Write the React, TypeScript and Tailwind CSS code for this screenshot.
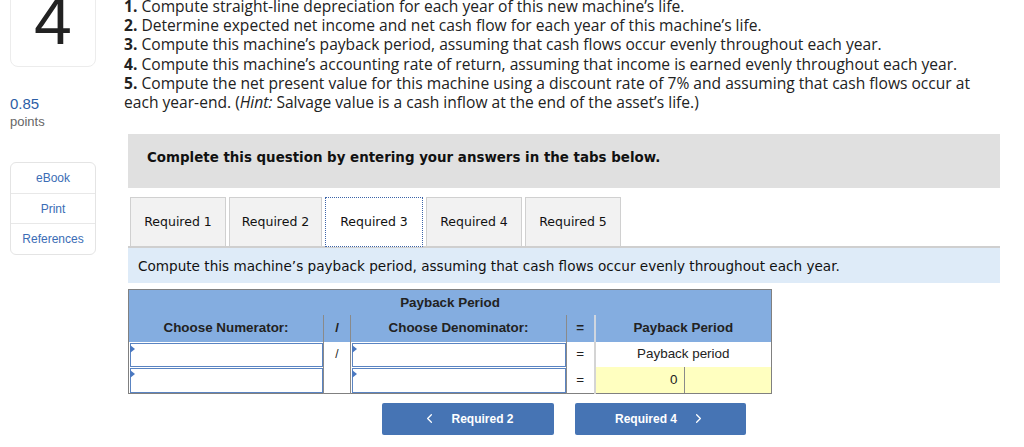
import React from 'react';
import { ChevronLeft, ChevronRight } from 'lucide-react';

const questionLines = [
  { n: '1.', text: 'Compute straight-line depreciation for each year of this new machine’s life.' },
  { n: '2.', text: 'Determine expected net income and net cash flow for each year of this machine’s life.' },
  { n: '3.', text: 'Compute this machine’s payback period, assuming that cash flows occur evenly throughout each year.' },
  { n: '4.', text: 'Compute this machine’s accounting rate of return, assuming that income is earned evenly throughout each year.' },
];

const tabs = [
  { label: 'Required 1', w: 'w-[96px]' },
  { label: 'Required 2', w: 'w-[93px]' },
  { label: 'Required 3', w: 'w-[98px]', active: true },
  { label: 'Required 4', w: 'w-[96px]' },
  { label: 'Required 5', w: 'w-[96px]' },
];

const InputBox: React.FC<{ yellow?: boolean }> = ({ yellow }) => (
  <div className={`relative h-full border-[1.5px] border-[#5a84c2] ${yellow ? 'bg-[#ffffc0]' : 'bg-white'}`}>
    <span className="absolute -left-[1px] top-[1px] w-0 h-0 border-y-[4px] border-y-transparent border-l-[5px] border-l-[#4a78c0]" />
  </div>
);

const App: React.FC = () => {
  return (
    <div className="w-[1024px] h-[447px] overflow-hidden bg-white flex" style={{ fontFamily: '"Liberation Sans", Arial, sans-serif' }}>
      {/* Left column */}
      <div className="w-[86px] ml-[10px] shrink-0 flex flex-col">
        <div className="-mt-[23px] h-[90px] border border-[#ececec] rounded-lg text-center">
          <div className="pt-[8px] text-[68px] leading-none text-[#222]">4</div>
        </div>
        <div className="mt-[28px] text-[15px] leading-[18px] text-[#2c5ea6]">0.85</div>
        <div className="mt-[1px] text-[13px] leading-[16px] text-[#666]">points</div>
        <div className="mt-[32px] border border-[#e4e4e4] rounded-md text-[12px] text-[#3b6db5] text-center">
          <div className="h-[31px] flex items-center justify-center border-b border-[#e8e8e8]">eBook</div>
          <div className="h-[30px] flex items-center justify-center border-b border-[#e8e8e8]">Print</div>
          <div className="h-[30px] flex items-center justify-center">References</div>
        </div>
      </div>

      {/* Main column */}
      <div className="ml-[28px] w-[880px] shrink-0">
        <div className="-mt-[3px] w-[870px] text-[15.6px] leading-[19.2px] text-[#222]" style={{ fontFamily: '"Open Sans", "Liberation Sans", sans-serif' }}>
          {questionLines.map((l) => (
            <div key={l.n} className="whitespace-nowrap">
              <span className="font-bold">{l.n}</span> {l.text}
            </div>
          ))}
          <div>
            <span className="font-bold">5.</span> Compute the net present value for this machine using a discount rate of 7% and assuming that cash flows occur at
            each year-end. (<i>Hint:</i> Salvage value is a cash inflow at the end of the asset’s life.)
          </div>
        </div>

        <div className="ml-[4px] w-[872px]" style={{ fontFamily: '"DejaVu Sans", Verdana, sans-serif' }}>
          {/* Instruction bar */}
          <div className="mt-[22px] h-[54px] bg-[#e0e0e0] pl-[19px] pt-[14px] text-[13.4px] font-bold text-[#111]">
            Complete this question by entering your answers in the tabs below.
          </div>

          {/* Tabs */}
          <div className="mt-[9px] flex gap-[3px] pl-[2px] items-end">
            {tabs.map((t) =>
              t.active ? (
                <div key={t.label} className={`${t.w} h-[50px] bg-white border border-dotted border-[#3c64a8] flex items-center justify-center text-[12.5px] text-[#111] -mb-[1px]`}>
                  {t.label}
                </div>
              ) : (
                <div key={t.label} className={`${t.w} h-[49px] bg-[#f2f2f2] border border-[#d0d0d0] border-b-0 flex items-center justify-center text-[12.5px] text-[#111]`}>
                  {t.label}
                </div>
              )
            )}
          </div>

          {/* Tab heading */}
          <div className="h-[37px] bg-[#deebf8] border-t-2 border-[#cfcfcf] pl-[10px] flex items-center text-[13.6px] text-[#111]">
            Compute this machine’s payback period, assuming that cash flows occur evenly throughout each year.
          </div>

          {/* Table */}
          <table className="mt-[6px] w-[643px] table-fixed border-collapse border border-[#808080] text-[13.4px] text-[#222]" style={{ fontFamily: '"Liberation Sans", Arial, sans-serif' }}>
            <colgroup>
              <col className="w-[195px]" />
              <col className="w-[27px]" />
              <col className="w-[216px]" />
              <col className="w-[28px]" />
              <col className="w-[177px]" />
            </colgroup>
            <thead className="bg-[#84ade0] font-bold">
              <tr className="h-[25px]">
                <th colSpan={5} className="text-center align-middle pt-[1px]">Payback Period</th>
              </tr>
              <tr className="h-[27px]">
                <th className="border-r border-[#8a8a8a] text-center">Choose Numerator:</th>
                <th className="border-r border-[#8a8a8a] text-center">/</th>
                <th className="border-r border-[#8a8a8a] text-center">Choose Denominator:</th>
                <th className="border-r-2 border-[#cfd6e0] text-center">=</th>
                <th className="text-center">Payback Period</th>
              </tr>
            </thead>
            <tbody>
              <tr className="h-[25px]">
                <td className="border-r border-[#8a8a8a] p-0 pt-[1px] pl-[1px] h-[25px]"><InputBox /></td>
                <td className="border-r border-[#8a8a8a] text-center text-[12px]">/</td>
                <td className="border-r border-[#8a8a8a] p-0 pt-[1px] pl-[1px] h-[25px]"><InputBox /></td>
                <td className="border-r-2 border-[#d4d4d4] text-center">=</td>
                <td className="text-center text-[13.4px]">Payback period</td>
              </tr>
              <tr className="h-[26px]">
                <td className="border-r border-[#8a8a8a] p-0 pt-[1px] pl-[1px] h-[26px]"><InputBox /></td>
                <td className="border-r border-[#8a8a8a]"></td>
                <td className="border-r border-[#8a8a8a] p-0 pt-[1px] pl-[1px] h-[26px]"><InputBox /></td>
                <td className="border-r-2 border-[#d4d4d4] text-center">=</td>
                <td className="p-0 bg-[#ffffc0]">
                  <div className="flex h-[26px]">
                    <div className="w-[89px] flex items-center justify-end pr-[6px] border-r border-[#8a8a8a]">0</div>
                    <div className="flex-1"></div>
                  </div>
                </td>
              </tr>
            </tbody>
          </table>

          {/* Navigation */}
          <div className="mt-[9px] flex justify-center gap-[21px] text-white text-[12px] font-bold" style={{ fontFamily: '"Liberation Sans", Arial, sans-serif' }}>
            <button className="w-[172px] h-[32px] bg-[#4674b4] rounded-[2px] flex items-center justify-center gap-[14px]">
              <ChevronLeft size={15} strokeWidth={2} />
              <span>Required 2</span>
            </button>
            <button className="w-[171px] h-[32px] bg-[#4674b4] rounded-[2px] flex items-center justify-center gap-[14px]">
              <span>Required 4</span>
              <ChevronRight size={15} strokeWidth={2} />
            </button>
          </div>
        </div>
      </div>
    </div>
  );
};

export default App;
